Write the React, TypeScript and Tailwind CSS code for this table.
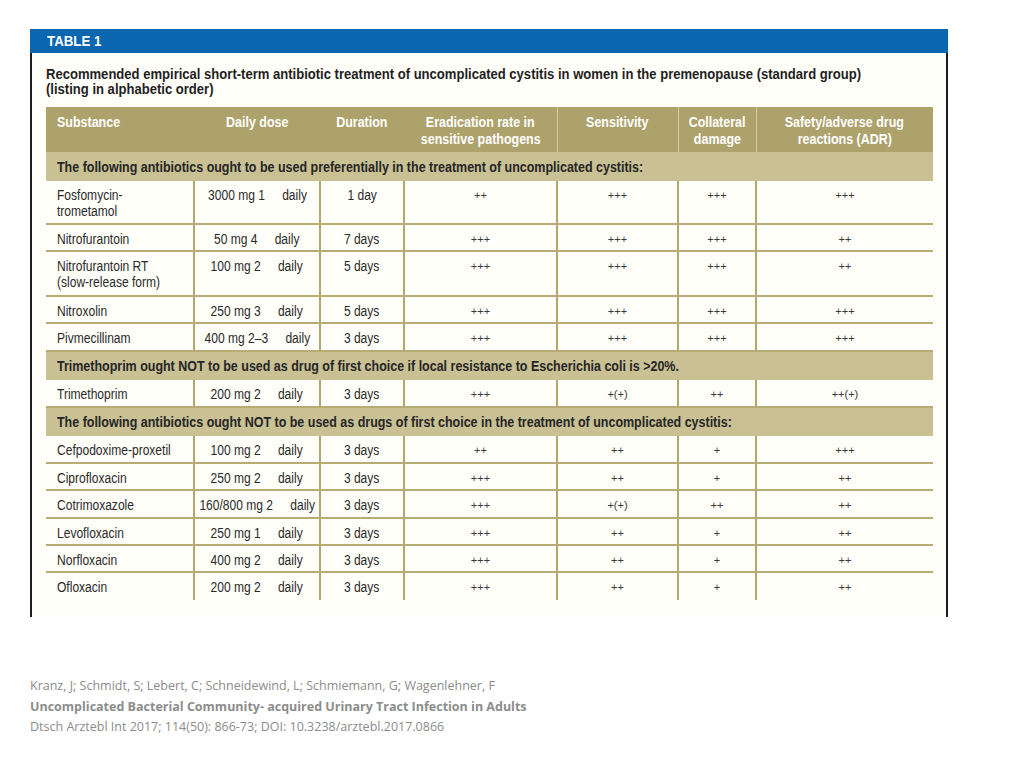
const sans = "font-['Liberation_Sans',Arial,sans-serif]";

type Row = {
  name: string[];
  dose: string;
  duration: string;
  erad: string;
  sens: string;
  coll: string;
  safety: string;
  h: string;
};

type Section = { title: string; rows: Row[] };

const sections: Section[] = [
  {
    title: "The following antibiotics ought to be used preferentially in the treatment of uncomplicated cystitis:",
    rows: [
      { name: ["Fosfomycin-", "trometamol"], dose: "3000 mg 1", duration: "1 day", erad: "++", sens: "+++", coll: "+++", safety: "+++", h: "h-[43px]" },
      { name: ["Nitrofurantoin"], dose: "50 mg 4", duration: "7 days", erad: "+++", sens: "+++", coll: "+++", safety: "++", h: "h-[27px]" },
      { name: ["Nitrofurantoin RT", "(slow-release form)"], dose: "100 mg 2", duration: "5 days", erad: "+++", sens: "+++", coll: "+++", safety: "++", h: "h-[45px]" },
      { name: ["Nitroxolin"], dose: "250 mg 3", duration: "5 days", erad: "+++", sens: "+++", coll: "+++", safety: "+++", h: "h-[27px]" },
      { name: ["Pivmecillinam"], dose: "400 mg 2–3", duration: "3 days", erad: "+++", sens: "+++", coll: "+++", safety: "+++", h: "h-[28px]" },
    ],
  },
  {
    title: "Trimethoprim ought NOT to be used as drug of first choice if local resistance to Escherichia coli is >20%.",
    rows: [
      { name: ["Trimethoprim"], dose: "200 mg 2", duration: "3 days", erad: "+++", sens: "+(+)", coll: "++", safety: "++(+)", h: "h-[27px]" },
    ],
  },
  {
    title: "The following antibiotics ought NOT to be used as drugs of first choice in the treatment of uncomplicated cystitis:",
    rows: [
      { name: ["Cefpodoxime-proxetil"], dose: "100 mg 2", duration: "3 days", erad: "++", sens: "++", coll: "+", safety: "+++", h: "h-[27px]" },
      { name: ["Ciprofloxacin"], dose: "250 mg 2", duration: "3 days", erad: "+++", sens: "++", coll: "+", safety: "++", h: "h-[27px]" },
      { name: ["Cotrimoxazole"], dose: "160/800 mg 2", duration: "3 days", erad: "+++", sens: "+(+)", coll: "++", safety: "++", h: "h-[28px]" },
      { name: ["Levofloxacin"], dose: "250 mg 1", duration: "3 days", erad: "+++", sens: "++", coll: "+", safety: "++", h: "h-[27px]" },
      { name: ["Norfloxacin"], dose: "400 mg 2", duration: "3 days", erad: "+++", sens: "++", coll: "+", safety: "++", h: "h-[27px]" },
      { name: ["Ofloxacin"], dose: "200 mg 2", duration: "3 days", erad: "+++", sens: "++", coll: "+", safety: "++", h: "h-[28px]" },
    ],
  },
];

const headers = [
  { label: ["Substance"], left: true },
  { label: ["Daily dose"], left: false },
  { label: ["Duration"], left: false },
  { label: ["Eradication rate in", "sensitive pathogens"], left: false },
  { label: ["Sensitivity"], left: false },
  { label: ["Collateral", "damage"], left: false },
  { label: ["Safety/adverse drug", "reactions (ADR)"], left: false },
];

// condensed text: the original uses Arial Narrow, which is not installed
function Narrow({ children, left }: { children: React.ReactNode; left?: boolean }) {
  return (
    <div className={`flex ${left ? "justify-start" : "justify-center"}`}>
      <span className={`whitespace-nowrap scale-x-[0.86] ${left ? "origin-left" : "origin-center"}`}>
        {children}
      </span>
    </div>
  );
}

function DataRow({ row, last }: { row: Row; last: boolean }) {
  const line = last ? "" : "border-b-2 border-b-[#b7ac74]";
  const cell = `${line} align-top pt-[6px] text-[14px] leading-[16px] text-[#2a2a2a]`;
  const vline = "border-l-2 border-l-[#b3a76d]";
  const plus = `${line} ${vline} align-top pt-[6px] text-center text-[11px] leading-[16px] text-[#3a3a3a]`;
  return (
    <tr className={`${row.h} bg-[#fffef9]`}>
      <td className={`${cell} pl-[11px]`}>
        {row.name.map((n) => (
          <Narrow key={n} left>
            {n}
          </Narrow>
        ))}
      </td>
      <td className={`${cell} ${vline}`}>
        <Narrow>
          {row.dose}
          <span className="inline-block w-[20px]" />
          daily
        </Narrow>
      </td>
      <td className={`${cell} ${vline}`}>
        <Narrow>{row.duration}</Narrow>
      </td>
      <td className={plus}>{row.erad}</td>
      <td className={plus}>{row.sens}</td>
      <td className={plus}>{row.coll}</td>
      <td className={plus}>{row.safety}</td>
    </tr>
  );
}

export default function App() {
  return (
    <div className={`min-h-[768px] w-[1024px] bg-white pt-[29px] ${sans}`}>
      <div className="ml-[30px] w-[918px]">
        <div className="h-[24px] bg-[#0a66ae] pl-[17px] text-[14px] font-bold leading-[25px] text-white">
          <span className="inline-block scale-x-[0.95] origin-left">TABLE 1</span>
        </div>
        <div className="h-[564px] border-x-2 border-[#1e1e1e] bg-[#fffef9] pl-[14px]">
          <div className="pt-[14px] text-[14.5px] font-bold leading-[15px] text-[#1f1f1f]">
            <div className="whitespace-nowrap">
              <span className="inline-block scale-x-[0.9] origin-left">
                Recommended empirical short-term antibiotic treatment of uncomplicated cystitis in women in the premenopause (standard group)
              </span>
            </div>
            <div className="whitespace-nowrap">
              <span className="inline-block scale-x-[0.9] origin-left">(listing in alphabetic order)</span>
            </div>
          </div>
          <table className="mt-[10px] w-[887px] table-fixed border-collapse">
            <colgroup>
              <col className="w-[148px]" />
              <col className="w-[126px]" />
              <col className="w-[84px]" />
              <col className="w-[153px]" />
              <col className="w-[121px]" />
              <col className="w-[78px]" />
              <col className="w-[177px]" />
            </colgroup>
            <thead>
              <tr className="h-[45px] bg-[#ada26c]">
                {headers.map((h, i) => (
                  <th
                    key={h.label[0]}
                    className={`${h.left ? "pl-[11px]" : ""} ${i > 3 ? "border-l border-l-[#d3cba3]" : ""} align-top pt-[7px] text-[14.5px] font-bold leading-[17px] text-white`}
                  >
                    {h.label.map((l) => (
                      <Narrow key={l} left={h.left}>
                        {l}
                      </Narrow>
                    ))}
                  </th>
                ))}
              </tr>
            </thead>
            <tbody>
              {sections.map((s, si) => (
                <>
                  <tr key={s.title} className="h-[29px] bg-[#c9c093]">
                    <td colSpan={7} className="pl-[11px] text-[14.5px] font-bold leading-[16px] text-[#262626]">
                      <Narrow left>{s.title}</Narrow>
                    </td>
                  </tr>
                  {s.rows.map((r, ri) => (
                    <DataRow
                      key={r.name[0]}
                      row={r}
                      last={si === sections.length - 1 && ri === s.rows.length - 1}
                    />
                  ))}
                </>
              ))}
            </tbody>
          </table>
        </div>
      </div>
      <div className="ml-[30px] mt-[59px] text-[12.5px] leading-[20.5px] text-[#8c8c8c] font-['Open_Sans',sans-serif]">
        <div>Kranz, J; Schmidt, S; Lebert, C; Schneidewind, L; Schmiemann, G; Wagenlehner, F</div>
        <div className="font-bold">Uncomplicated Bacterial Community- acquired Urinary Tract Infection in Adults</div>
        <div>Dtsch Arztebl Int 2017; 114(50): 866-73; DOI: 10.3238/arztebl.2017.0866</div>
      </div>
    </div>
  );
}
